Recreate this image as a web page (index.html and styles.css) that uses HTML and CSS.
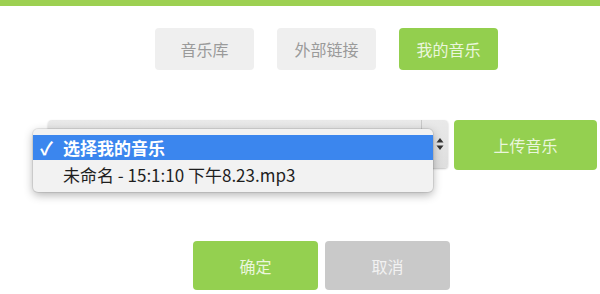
FILE: index.html
```html
<!DOCTYPE html>
<html lang="zh-CN">
<head>
    <meta charset="UTF-8">
    <title>我的音乐</title>
    <link rel="stylesheet" href="styles.css">
</head>
<body>
    <div class="top-bar"></div>

    <!-- Tabs -->
    <nav class="tabs">
        <span class="tab">音乐库</span>
        <span class="tab">外部链接</span>
        <span class="tab active">我的音乐</span>
    </nav>

    <!-- Select + upload -->
    <div class="upload-row">
        <div class="select-box">
            <span class="select-arrow">
                <svg width="8" height="14" viewBox="0 0 8 14">
                    <path d="M0.5 5.5 L4 1 L7.5 5.5 Z M0.5 8.5 L4 13 L7.5 8.5 Z" fill="#333"/>
                </svg>
            </span>
            <ul class="dropdown">
                <li class="selected"><span class="check">✓</span>选择我的音乐</li>
                <li><span class="check"></span>未命名 - 15:1:10 下午8.23.mp3</li>
            </ul>
        </div>
        <button class="btn btn-green upload">上传音乐</button>
    </div>

    <!-- Actions -->
    <div class="actions">
        <button class="btn btn-green">确定</button>
        <button class="btn btn-gray">取消</button>
    </div>
</body>
</html>
```

FILE: styles.css
```css
* {
    margin: 0;
    padding: 0;
    box-sizing: border-box;
}

body {
    font-family: "Noto Sans CJK SC", "Noto Sans", sans-serif;
    background-color: #fff;
    width: 600px;
    height: 294px;
    overflow: hidden;
}

.top-bar {
    height: 6px;
    background-color: #9dd052;
}

/* Tabs */
.tabs {
    display: flex;
    gap: 23px;
    padding-left: 155px;
    margin-top: 22px;
}

.tab {
    width: 99px;
    height: 42px;
    display: flex;
    align-items: center;
    justify-content: center;
    background-color: #efefef;
    color: #9a9a9a;
    font-size: 16px;
    border-radius: 4px;
}

.tab.active {
    background-color: #93cf4e;
    color: #eaf6dc;
}

/* Select row */
.upload-row {
    display: flex;
    align-items: flex-start;
    gap: 6px;
    padding-left: 48px;
    margin-top: 50px;
}

.select-box {
    position: relative;
    width: 400px;
    height: 48px;
    background: linear-gradient(#e9e9e9, #dedede);
    border-radius: 4px;
    box-shadow: 0 1px 2px rgba(0, 0, 0, 0.25);
}

.select-arrow {
    position: absolute;
    top: 0;
    right: 0;
    width: 27px;
    height: 48px;
    border-left: 1px solid #c8c8c8;
    display: flex;
    align-items: center;
    justify-content: center;
    padding-left: 10px;
}

.dropdown {
    position: absolute;
    left: -15px;
    top: 9px;
    width: 400px;
    list-style: none;
    background-color: #f2f2f2;
    border-radius: 5px;
    padding: 6px 0 5px;
    box-shadow: 0 3px 10px rgba(0, 0, 0, 0.3), 0 0 0 1px rgba(0, 0, 0, 0.08);
    font-size: 17px;
    color: #1e1e1e;
}

.dropdown li {
    height: 25px;
    line-height: 25px;
    display: flex;
    align-items: center;
    white-space: nowrap;
}

.dropdown li.selected {
    background-color: #3b86ee;
    color: #fff;
    font-weight: bold;
    margin-bottom: 2px;
}

.check {
    width: 30px;
    padding-left: 7px;
    font-size: 18px;
}

.btn {
    border: none;
    font-family: inherit;
    font-size: 16px;
    border-radius: 4px;
}

.btn-green {
    background-color: #94d050;
    color: #eaf6dc;
}

.btn-gray {
    background-color: #c9c9c9;
    color: #f2f2f2;
}

.upload {
    width: 143px;
    height: 50px;
}

/* Actions */
.actions {
    display: flex;
    gap: 7px;
    padding-left: 193px;
    margin-top: 71px;
}

.actions .btn {
    width: 125px;
    height: 49px;
}
```
